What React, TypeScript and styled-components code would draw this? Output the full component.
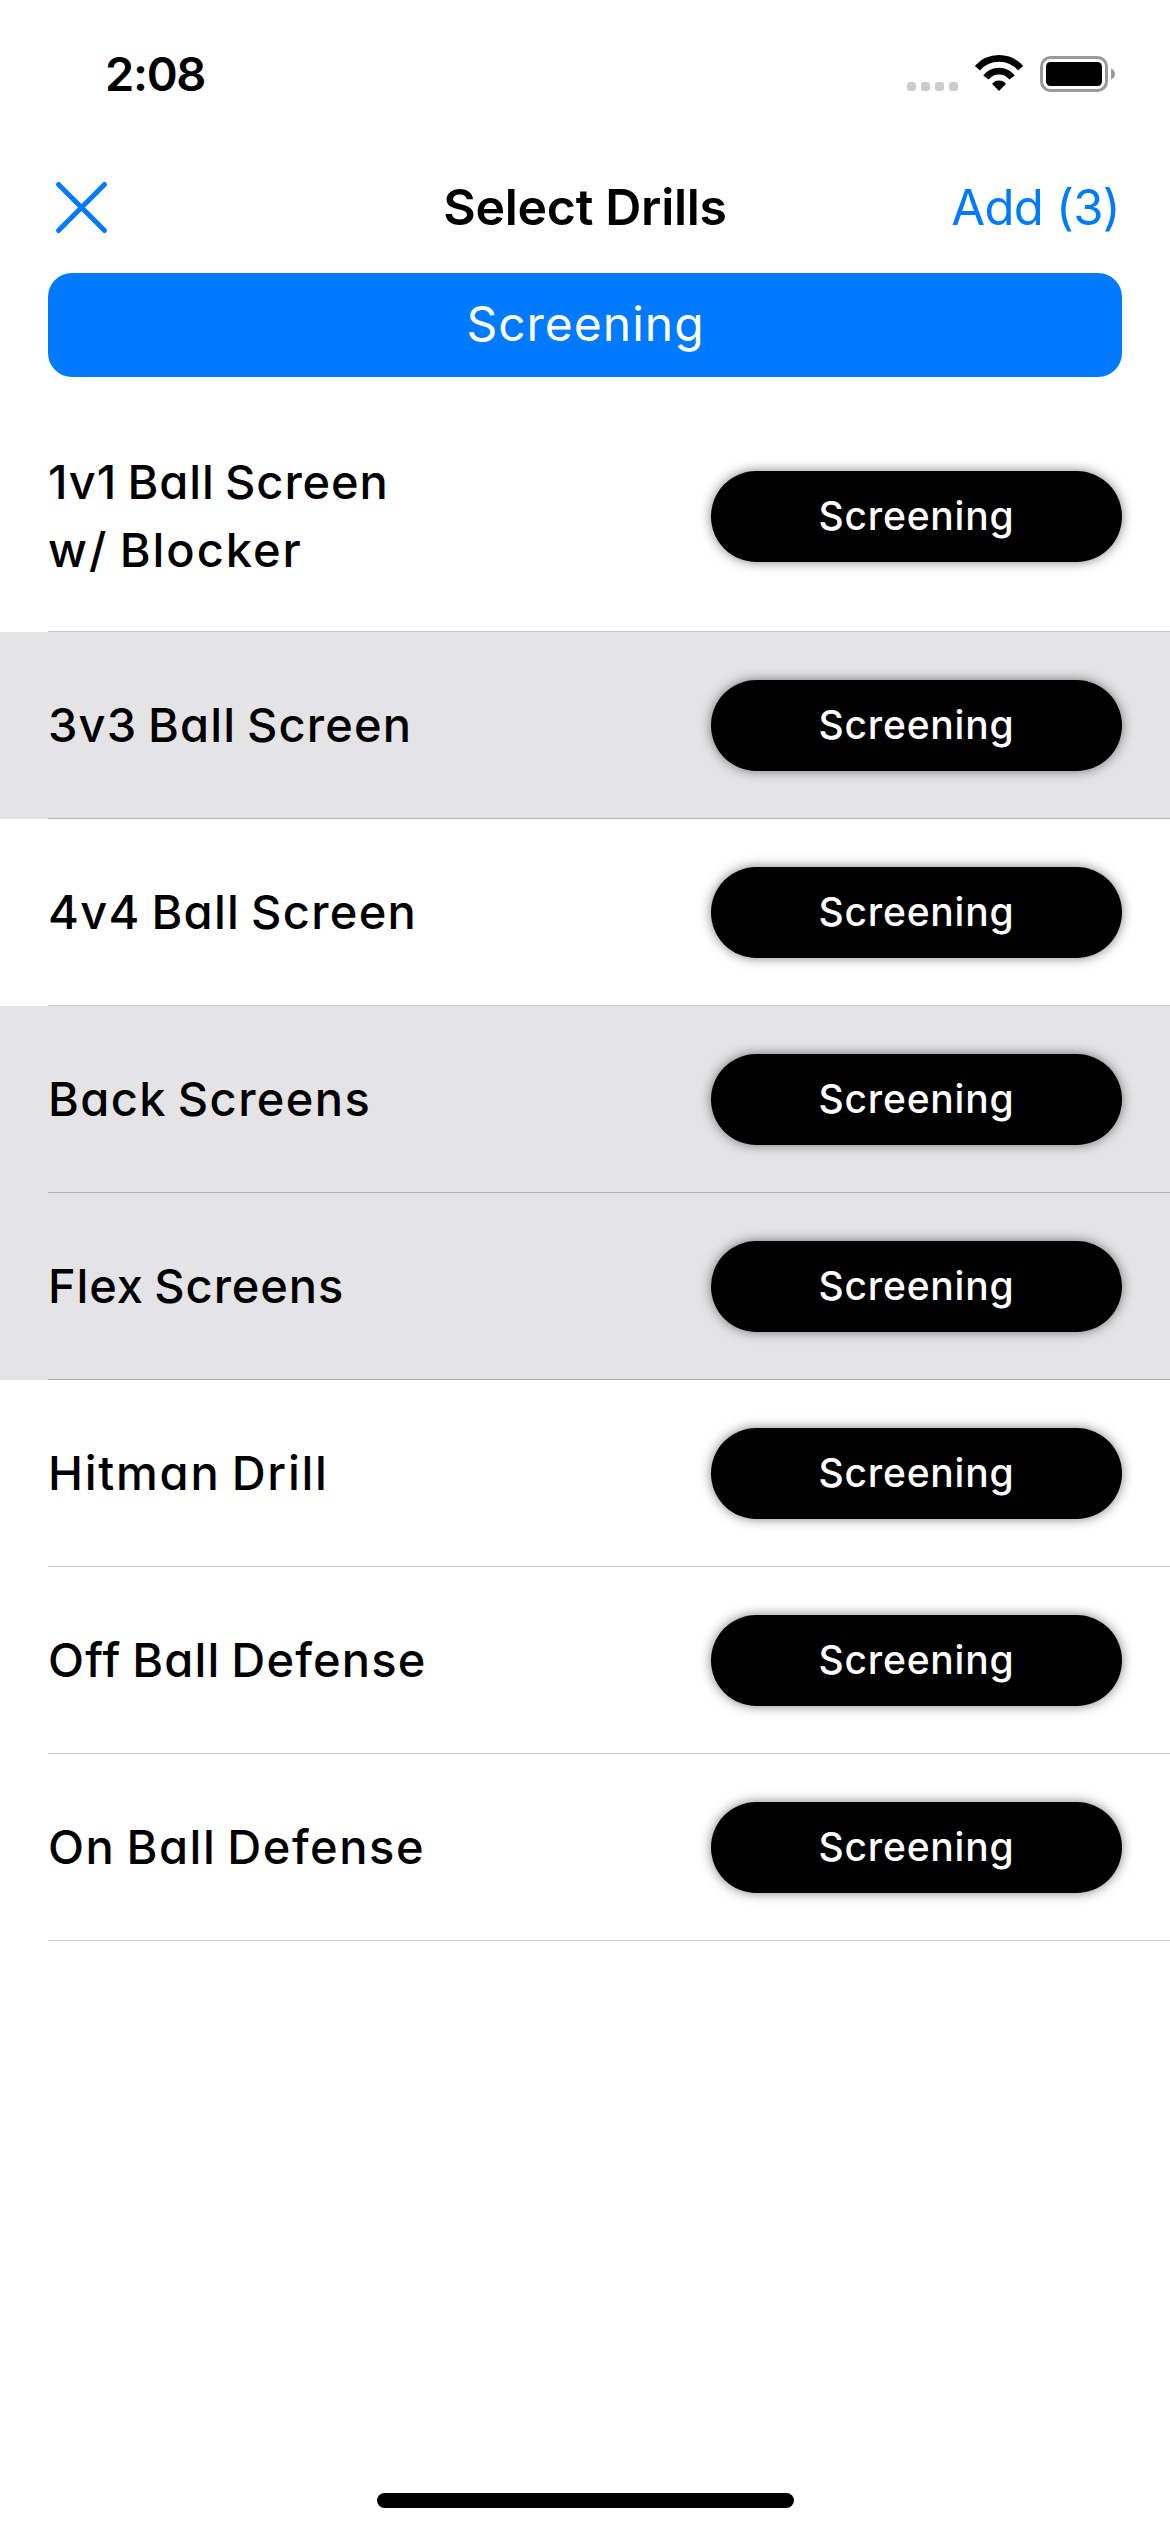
import React from "react";
import styled, { createGlobalStyle } from "styled-components";

const GlobalStyle = createGlobalStyle`
  *, *::before, *::after { box-sizing: border-box; }
  html, body { margin: 0; background: #fff; }
  button { border: 0; margin: 0; padding: 0; background: none; font: inherit; color: inherit; }
`;

const Screen = styled.div`
  display: flex;
  flex-direction: column;
  width: 1170px;
  height: 2532px;
  overflow: hidden;
  background: #fff;
  color: #000;
  font-family: Inter, "Liberation Sans", sans-serif;
`;

const StatusBar = styled.header`
  display: flex;
  justify-content: space-between;
  align-items: center;
  height: 148px;
  padding: 0 54px 0 105px;
`;

const Clock = styled.time`
  font-size: 47px;
  font-weight: 600;
  line-height: 60px;
  letter-spacing: -1.3px;
`;

const StatusIcons = styled.svg`
  display: block;
  width: 210px;
  height: 40px;
`;

const NavBar = styled.nav`
  display: grid;
  grid-template-columns: 1fr auto 1fr;
  align-items: center;
  height: 118px;
  padding: 0 50px;
`;

const CloseButton = styled.button`
  display: flex;
  justify-self: start;
  margin-left: 4px;
`;

const Title = styled.h1`
  margin: 0;
  font-size: 50px;
  font-weight: 600;
  line-height: 60px;
  letter-spacing: -0.3px;
`;

const AddButton = styled.button`
  justify-self: end;
  padding-top: 2px;
  color: #007aff;
  font-size: 49px;
  line-height: 60px;
  letter-spacing: -0.7px;
`;

const CategoryButton = styled.button`
  height: 104px;
  margin: 7px 48px 24px;
  padding: 0 0 2px 1px;
  border-radius: 24px;
  background: #007aff;
  color: #fff;
  font-size: 48px;
  line-height: 102px;
  letter-spacing: 1px;
`;

const DrillList = styled.ul`
  flex: 1;
  margin: 0;
  padding: 0;
  list-style: none;
`;

const DrillRow = styled.li<{ $selected?: boolean; $tall?: boolean }>`
  display: flex;
  justify-content: space-between;
  align-items: center;
  height: ${(p) => (p.$tall ? 231 : 187)}px;
  padding: 0 48px;
  background:
    linear-gradient(${(p) => (p.$selected ? "#b0b0b2, #b0b0b2" : "#c6c6c8, #c6c6c8")}) 48px 100% / 100% 1px no-repeat,
    ${(p) => (p.$selected ? "#e4e4e6" : "#fff")};
`;

const DrillName = styled.div`
  display: flex;
  flex-direction: column;
  padding-bottom: 1px;
`;

const NameLine = styled.span<{ $tracking: number }>`
  font-size: 47px;
  font-weight: 500;
  line-height: 68px;
  letter-spacing: ${(p) => p.$tracking}px;
  word-spacing: -3px;
  font-feature-settings: "cv11";
`;

const Tag = styled.span`
  width: 411px;
  height: 91px;
  border-radius: 46px;
  background: #000;
  color: #fff;
  box-shadow: 0 0 12px rgba(0, 0, 0, 0.5);
  font-size: 39px;
  font-weight: 500;
  line-height: 90px;
  letter-spacing: 0.8px;
  text-align: center;
`;

const HomeIndicator = styled.div`
  align-self: center;
  width: 417px;
  height: 15px;
  margin-bottom: 24px;
  border-radius: 8px;
  background: #000;
`;

type Line = { text: string; tracking: number };
type Drill = { lines: Line[]; selected?: boolean };

const drills: Drill[] = [
  {
    lines: [
      { text: "1v1 Ball Screen", tracking: 0.9 },
      { text: "w/ Blocker", tracking: 1.95 },
    ],
  },
  { lines: [{ text: "3v3 Ball Screen", tracking: 1.15 }], selected: true },
  { lines: [{ text: "4v4 Ball Screen", tracking: 1.3 }] },
  { lines: [{ text: "Back Screens", tracking: 1.4 }], selected: true },
  { lines: [{ text: "Flex Screens", tracking: 0.9 }], selected: true },
  { lines: [{ text: "Hitman Drill", tracking: 1.75 }] },
  { lines: [{ text: "Off Ball Defense", tracking: 1.2 }] },
  { lines: [{ text: "On Ball Defense", tracking: 1.55 }] },
];

export default function App() {
  return (
    <Screen>
      <GlobalStyle />
      <StatusBar>
        <Clock>2:08</Clock>
        <StatusIcons viewBox="906 54 210 40" aria-hidden="true">
          <g fill="#ccc">
            {[907, 921, 935, 949].map((x) => (
              <rect key={x} x={x} y="82" width="9" height="9" rx="3" />
            ))}
          </g>
          <g fill="none" stroke="#000" strokeWidth="6.8">
            <path d="M977.4 68.2a28.7 28.7 0 0 1 43.2 0" />
            <path d="M985.9 77.5a16.5 16.5 0 0 1 26.2 0" />
          </g>
          <path d="M999 91l-7-7.2a9 9 0 0 1 14 0z" />
          <rect x="1041.5" y="57.5" width="65" height="33" rx="9" fill="none" stroke="#999" strokeWidth="3" />
          <rect x="1046" y="62" width="56" height="24" rx="4.5" />
          <path d="M1111 68.5c5.3 2 5.3 9 0 11z" fill="#999" />
        </StatusIcons>
      </StatusBar>
      <NavBar>
        <CloseButton aria-label="Close">
          <svg width="56" height="56" viewBox="54 179 56 56" fill="none" stroke="#007aff" strokeWidth="5" strokeLinecap="round">
            <path d="M58.5 184.5L104.5 230.5M104.5 184.5L58.5 230.5" />
          </svg>
        </CloseButton>
        <Title>Select Drills</Title>
        <AddButton>Add (3)</AddButton>
      </NavBar>
      <CategoryButton>Screening</CategoryButton>
      <DrillList>
        {drills.map((d) => (
          <DrillRow key={d.lines[0].text} $selected={d.selected} $tall={d.lines.length > 1}>
            <DrillName>
              {d.lines.map((l) => (
                <NameLine key={l.text} $tracking={l.tracking}>
                  {l.text}
                </NameLine>
              ))}
            </DrillName>
            <Tag>Screening</Tag>
          </DrillRow>
        ))}
      </DrillList>
      <HomeIndicator />
    </Screen>
  );
}
